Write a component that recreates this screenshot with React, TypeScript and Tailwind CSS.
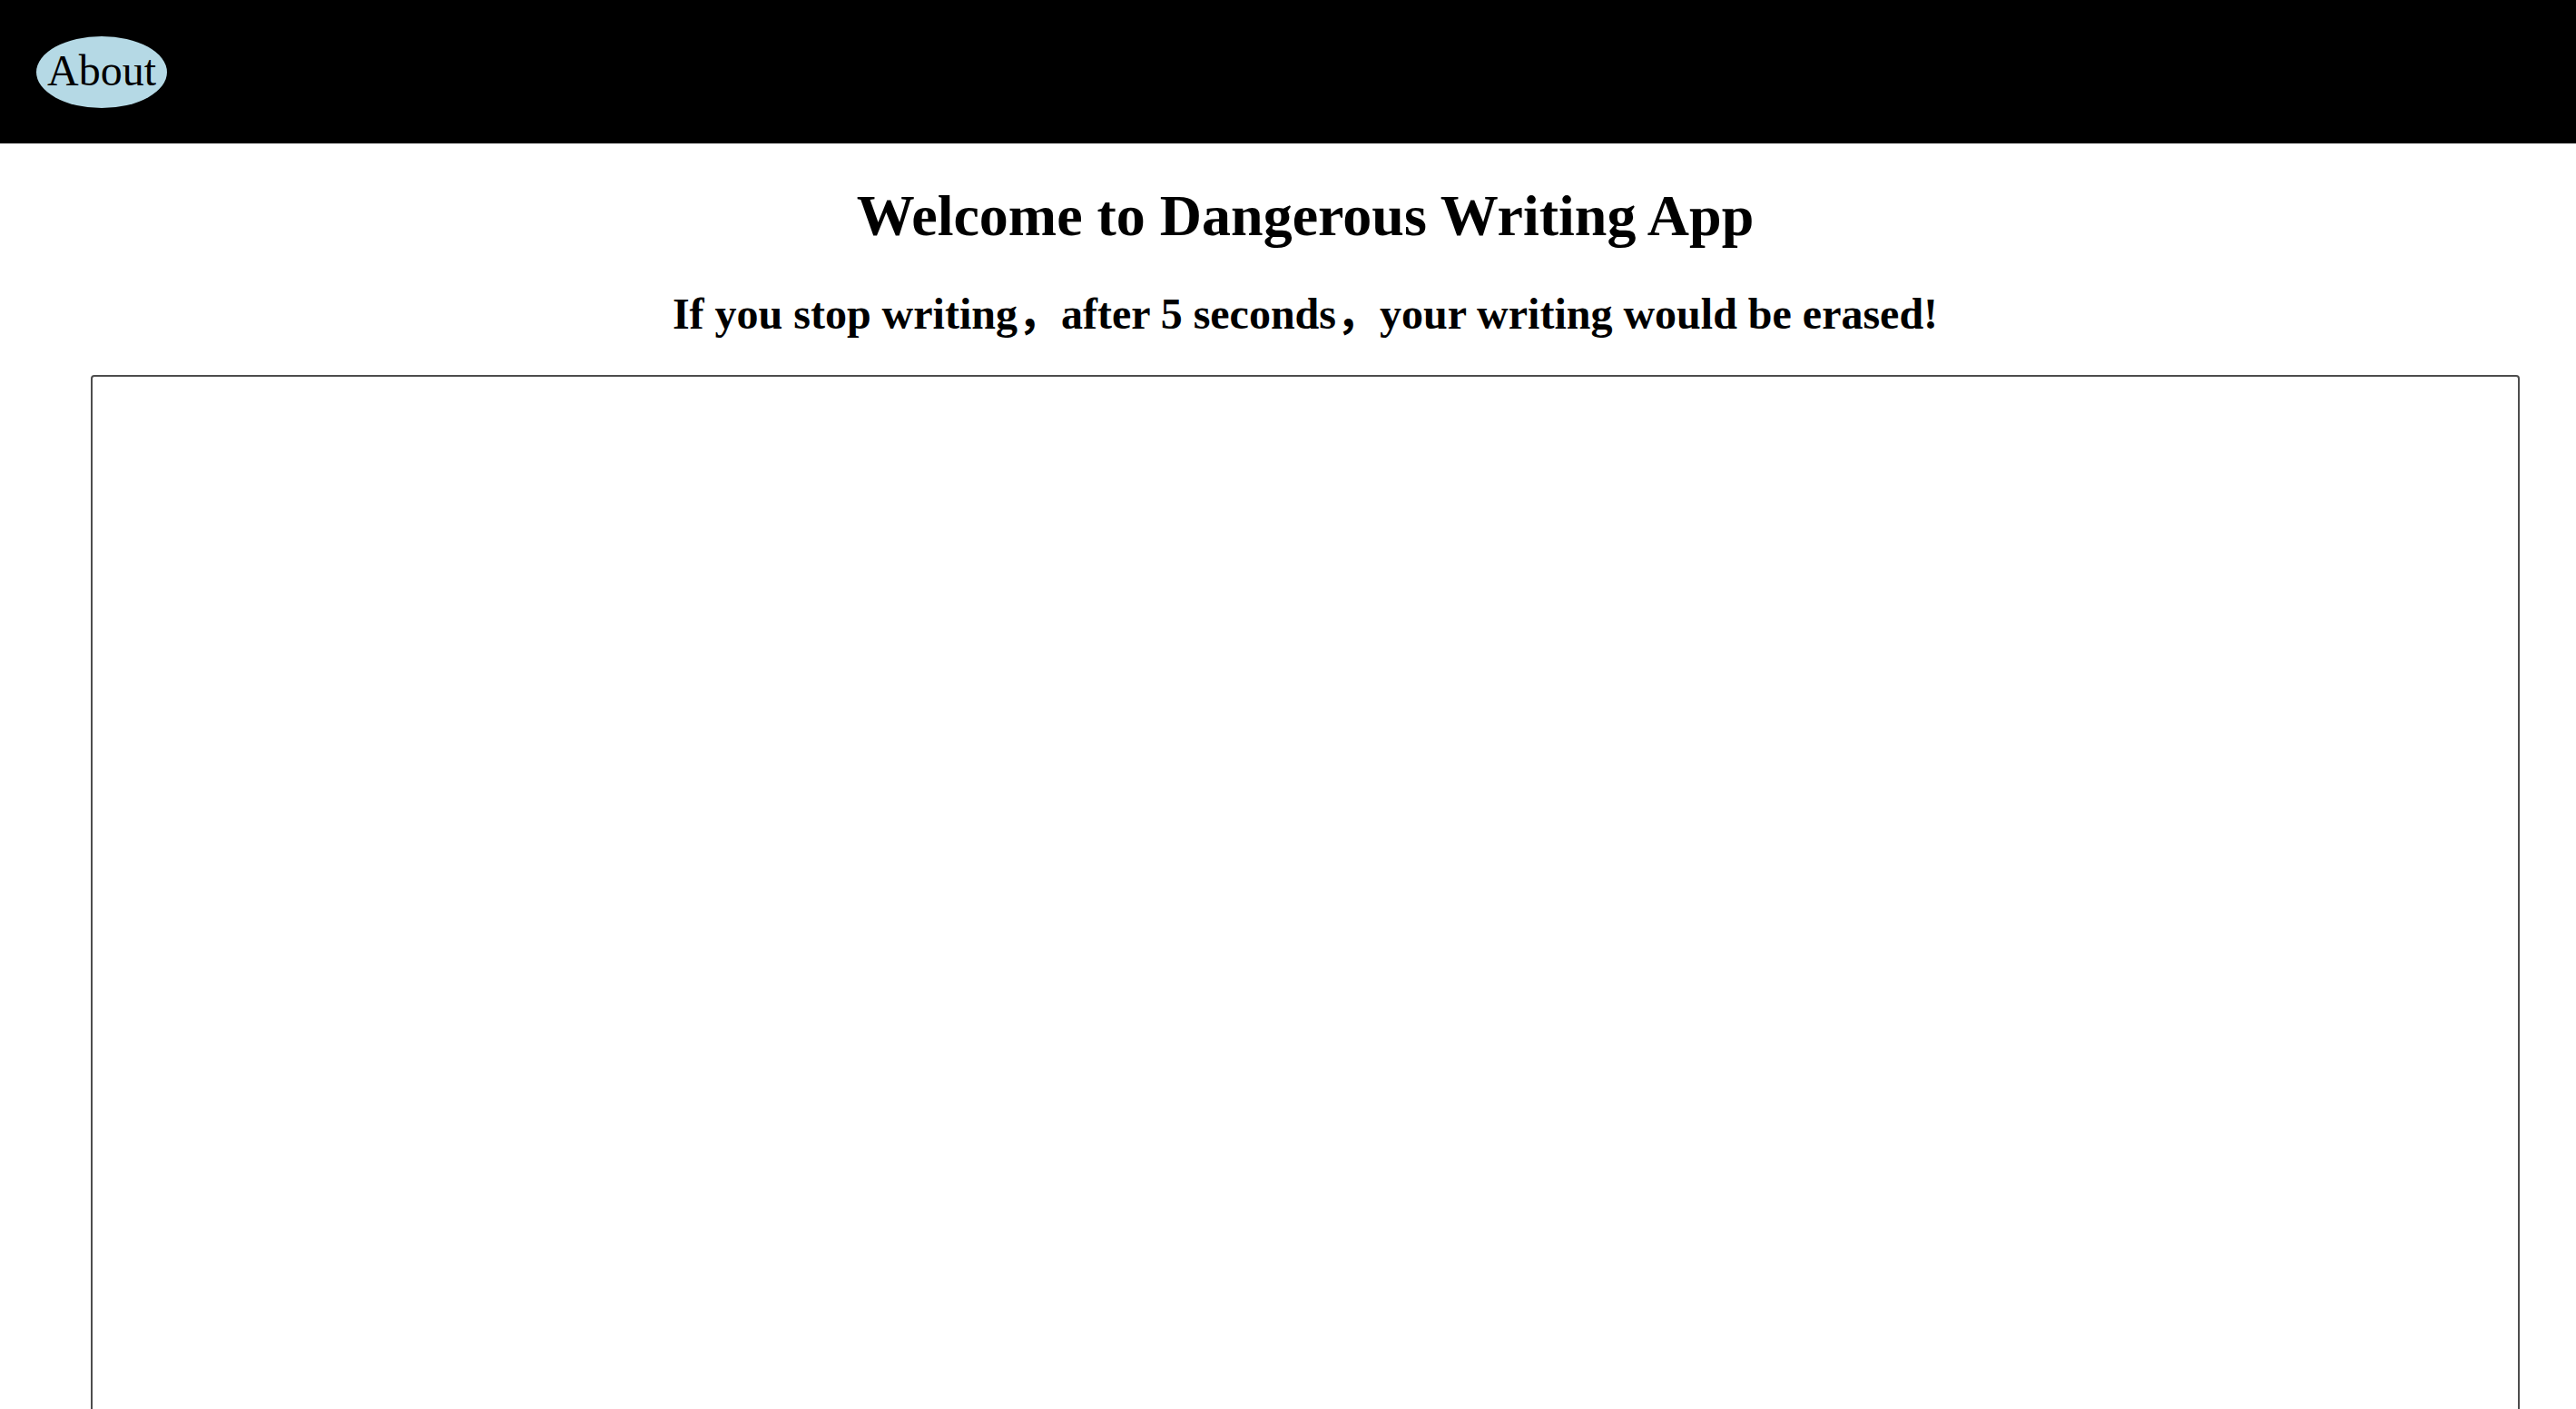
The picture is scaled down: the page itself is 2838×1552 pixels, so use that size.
import React, { useState } from "react";

const serif = { fontFamily: '"Liberation Serif", "Noto Sans CJK SC", serif' };

export default function App() {
  const [text, setText] = useState("");

  return (
    <div className="min-h-screen w-full bg-white text-black" style={serif}>
      {/* Top bar */}
      <nav className="flex h-[158px] w-full items-center bg-black pl-[40px]">
        <button className="rounded-[50%] bg-[#b5d9e5] px-[12px] pt-[10px] pb-[14px] text-[48px] leading-[55px] text-black">
          About
        </button>
      </nav>

      {/* Main column */}
      <main className="ml-[100px] w-[2676px]">
        <h1 className="mt-[43px] text-center text-[64px] font-bold leading-[74px]">
          Welcome to Dangerous Writing App
        </h1>
        <h2 className="mt-[43px] text-center text-[48px] font-bold leading-[55px]">
          If you stop writing，after 5 seconds，your writing would be erased!
        </h2>

        {/* Writing area */}
        <textarea
          value={text}
          onChange={(e) => setText(e.target.value)}
          className="mt-[40px] block h-[1400px] w-full resize-none rounded-[4px] border-2 border-[#4d4d4d] bg-white p-[4px] text-[26px] outline-none"
        />
      </main>
    </div>
  );
}
